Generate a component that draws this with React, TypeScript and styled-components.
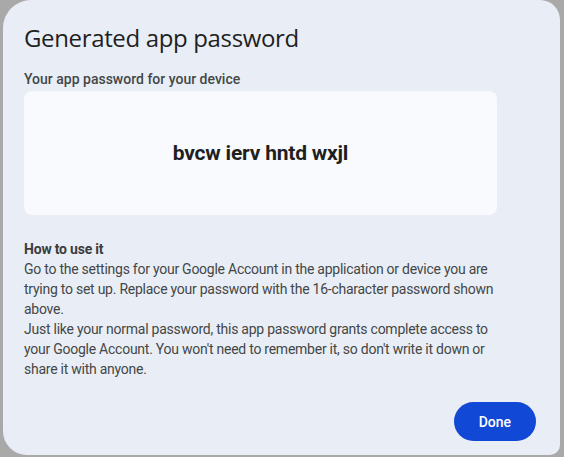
import styled, { createGlobalStyle } from 'styled-components';

const GlobalStyle = createGlobalStyle`
  html, body {
    margin: 0;
    padding: 0;
    background: #a9a9a9;
  }
  body {
    font-family: Roboto, "Noto Sans", "Liberation Sans", sans-serif;
  }
`;

const Backdrop = styled.div`
  box-sizing: border-box;
  height: 457px;
  padding: 0 4px 2px 3px;
  display: flex;
`;

const Dialog = styled.div`
  flex: 1;
  display: flex;
  flex-direction: column;
  background: #e9eef6;
  border-radius: 28px 20px 10px 24px;
  padding: 22px 24px 14px 21px;
  color: #1f1f1f;
`;

const Content = styled.div`
  width: 473px;
`;

const Title = styled.h1`
  margin: 0;
  font-family: "Open Sans", Roboto, sans-serif;
  font-size: 24px;
  font-weight: 400;
  line-height: 32px;
  letter-spacing: -0.35px;
  color: #1f1f1f;
`;

const Label = styled.div`
  margin-top: 15px;
  font-size: 14px;
  font-weight: 500;
  line-height: 20px;
  color: #444746;
`;

const PasswordBox = styled.div`
  margin-top: 2px;
  height: 124px;
  border-radius: 8px;
  background: #f8fafd;
  display: flex;
  align-items: center;
  justify-content: center;
`;

const Password = styled.span`
  font-family: Roboto, sans-serif;
  font-size: 21px;
  font-weight: 700;
  letter-spacing: -0.2px;
  color: #1f1f1f;
`;

const Heading = styled.div`
  margin-top: 24px;
  font-size: 14px;
  font-weight: 700;
  line-height: 20px;
  letter-spacing: -0.2px;
  color: #3c3c3c;
`;

const Paragraph = styled.p`
  margin: 0;
  font-size: 14px;
  line-height: 20px;
  letter-spacing: -0.25px;
  color: #444746;
`;

const Footer = styled.div`
  margin-top: auto;
  display: flex;
  justify-content: flex-end;
`;

const DoneButton = styled.button`
  height: 39px;
  padding: 0 25px;
  border: none;
  border-radius: 20px;
  background: #1148d5;
  color: #fff;
  font-family: Roboto, sans-serif;
  font-size: 14px;
  font-weight: 500;
  cursor: pointer;
`;

export default function App() {
  return (
    <>
      <GlobalStyle />
      <Backdrop>
        <Dialog>
          <Content>
            <Title>Generated app password</Title>
            <Label>Your app password for your device</Label>
            <PasswordBox>
              <Password>bvcw ierv hntd wxjl</Password>
            </PasswordBox>
            <Heading>How to use it</Heading>
            <Paragraph>
              Go to the settings for your Google Account in the application or device you are
              trying to set up. Replace your password with the 16-character password shown
              above.
            </Paragraph>
            <Paragraph>
              Just like your normal password, this app password grants complete access to your
              Google Account. You won't need to remember it, so don't write it down or share it
              with anyone.
            </Paragraph>
          </Content>
          <Footer>
            <DoneButton>Done</DoneButton>
          </Footer>
        </Dialog>
      </Backdrop>
    </>
  );
}
